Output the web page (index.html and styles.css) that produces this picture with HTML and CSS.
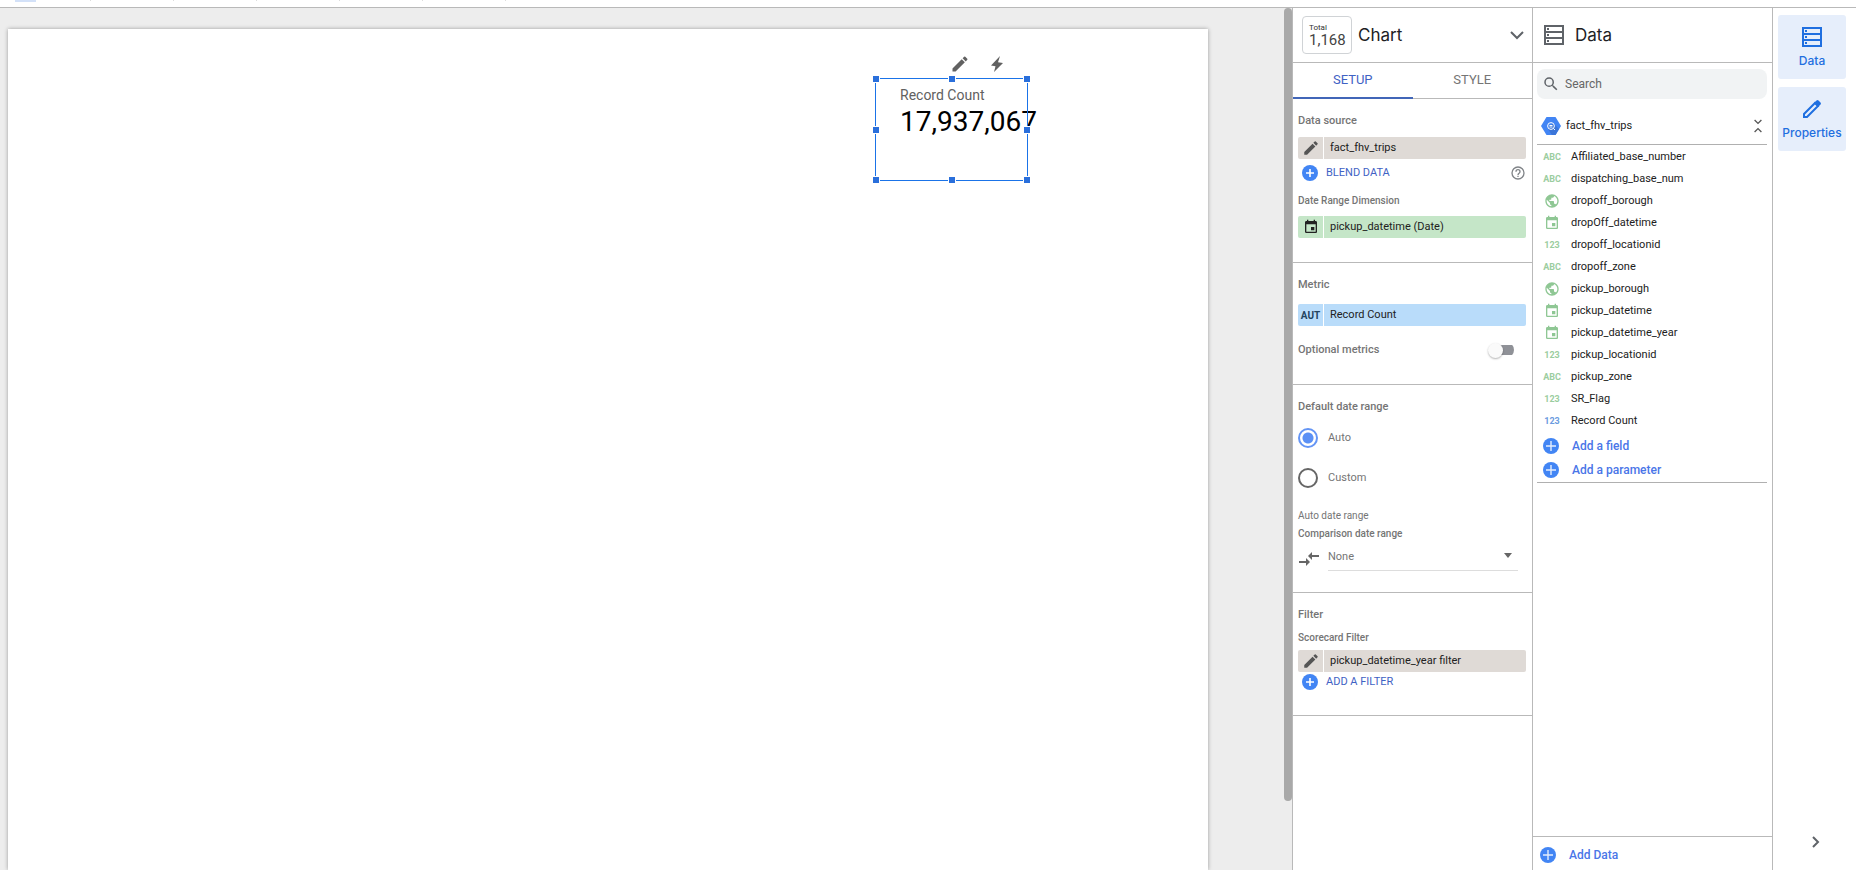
FILE: index.html
```
<!DOCTYPE html>
<html lang="en">
<head>
<meta charset="utf-8">
<title>Report editor</title>
<link rel="stylesheet" href="styles.css">
</head>
<body>
<svg class="defs" aria-hidden="true">
  <symbol id="pencil" viewBox="0 0 24 24"><path d="M3 17.250V21h3.750L17.810 9.940l-3.750-3.750L3 17.250zM20.710 7.040a1 1 0 0 0 0-1.410l-2.340-2.340a1 1 0 0 0-1.410 0l-1.830 1.830 3.750 3.750 1.830-1.830z"/></symbol>
  <symbol id="plus" viewBox="0 0 16 16"><circle cx="8" cy="8" r="8" fill="#4285f4"/><path d="M8 4v8M4 8h8" stroke="#fff" stroke-width="1.600"/></symbol>
  <symbol id="plus-large" viewBox="0 0 16 16"><circle cx="8" cy="8" r="8" fill="#4285f4"/><path d="M8 3v10M3 8h10" stroke="#e3edfd" stroke-width="1.400"/></symbol>
  <symbol id="calendar" viewBox="0 0 24 24"><path d="M17 12h-5v5h5v-5zM16 1v2H8V1H6v2H5c-1.110 0-2 .9-2 2v14a2 2 0 0 0 2 2h14c1.100 0 2-.9 2-2V5c0-1.100-.9-2-2-2h-1V1h-2zm3 18H5V8h14v11z"/></symbol>
  <symbol id="globe" viewBox="0 0 24 24"><path d="M12 2C6.480 2 2 6.480 2 12s4.480 10 10 10 10-4.480 10-10S17.520 2 12 2zm-1 17.930c-3.950-.49-7-3.850-7-7.930 0-.62.080-1.210.210-1.790L9 15v1c0 1.100.9 2 2 2v1.930zm6.900-2.540c-.26-.81-1-1.390-1.900-1.390h-1v-3c0-.55-.45-1-1-1H8v-2h2c.55 0 1-.45 1-1V7h2c1.100 0 2-.9 2-2v-.41c2.930 1.190 5 4.060 5 7.410 0 2.080-.8 3.970-2.100 5.390z"/></symbol>
  <symbol id="storage" viewBox="0 0 20 20"><path fill="none" stroke="currentColor" stroke-width="2" d="M1 1h18v18H1zM1 7h18M1 13h18"/><path fill="currentColor" d="M3 3h2v2H3zM3 9h2v2H3zM3 15h2v2H3z"/></symbol>
</svg>

<div class="toolbar"><span class="tool-active"></span><i></i><i></i><i></i><i></i><i></i><i></i></div>

<div class="editor">
  <main class="canvas">
    <div class="page">
      <div class="chart-actions">
        <button class="bare" aria-label="Edit"><svg width="20" height="20"><use href="#pencil"/></svg></button>
        <button class="bare" aria-label="Explore"><svg width="18" height="18" viewBox="0 0 18 18"><path d="M12 1 3 10.500l4.500.8L6 17l9-9-5-.8z"/></svg></button>
      </div>
      <div class="scorecard">
        <div class="score-label">Record Count</div>
        <div class="score-value">17,937,067</div>
        <div class="selection">
          <b class="h nw"></b><b class="h n"></b><b class="h ne"></b><b class="h w"></b><b class="h e"></b><b class="h sw"></b><b class="h s"></b><b class="h se"></b>
        </div>
      </div>
    </div>
    <div class="scroll"><div class="thumb"></div></div>
  </main>

  <aside class="panel">
    <header class="head">
      <div class="preview"><span>Total</span><strong>1,168</strong></div>
      <h2>Chart</h2>
      <button class="bare push" aria-label="Chart type"><svg width="14" height="9" viewBox="0 0 14 9" fill="none" stroke="#5f6368" stroke-width="2"><path d="M1 1l6 6 6-6"/></svg></button>
    </header>
    <nav class="tabs"><button class="tab on">SETUP</button><button class="tab">STYLE</button></nav>

    <section class="section">
      <h3>Data source</h3>
      <button class="chip tan"><span class="chip-icon"><svg width="18" height="18"><use href="#pencil"/></svg></span><span>fact_fhv_trips</span></button>
      <div class="link-row blend">
        <button class="link"><svg width="16" height="16"><use href="#plus"/></svg>BLEND DATA</button>
        <button class="bare push" aria-label="Help"><svg width="16" height="16" viewBox="0 0 24 24" fill="#808488"><path d="M11 18h2v-2h-2v2zm1-16a10 10 0 1 0 0 20 10 10 0 0 0 0-20zm0 18a8 8 0 1 1 0-16 8 8 0 0 1 0 16zm0-14a4 4 0 0 0-4 4h2a2 2 0 1 1 4 0c0 2-3 1.750-3 5h2c0-2.250 3-2.500 3-5a4 4 0 0 0-4-4z"/></svg></button>
      </div>
      <h4 class="dimension">Date Range Dimension</h4>
      <button class="chip green"><span class="chip-icon"><svg width="16" height="16"><use href="#calendar"/></svg></span><span>pickup_datetime (Date)</span></button>
    </section>

    <section class="section metric">
      <h3>Metric</h3>
      <button class="chip blue"><span class="chip-icon aut">AUT</span><span>Record Count</span></button>
      <label class="toggle-row">Optional metrics<input class="toggle" type="checkbox"></label>
    </section>

    <section class="section dates">
      <h3>Default date range</h3>
      <label class="radio"><input type="radio" name="range" checked>Auto</label>
      <label class="radio"><input type="radio" name="range">Custom</label>
      <p>Auto date range</p>
      <h4 id="cmp">Comparison date range</h4>
      <div class="compare">
        <svg width="20" height="14" viewBox="0 0 20 14" fill="#666"><path d="M9 4l4-4v3h7v2h-7v3zM0 9h7V6l4 4-4 4v-3H0z"/></svg>
        <div class="select-wrap"><select aria-labelledby="cmp"><option>None</option></select></div>
      </div>
    </section>

    <section class="section filter">
      <h3>Filter</h3>
      <h4>Scorecard Filter</h4>
      <button class="chip tan"><span class="chip-icon"><svg width="18" height="18"><use href="#pencil"/></svg></span><span>pickup_datetime_year filter</span></button>
      <div class="link-row"><button class="link"><svg width="16" height="16"><use href="#plus"/></svg>ADD A FILTER</button></div>
    </section>
  </aside>

  <aside class="panel data">
    <header class="head"><svg width="20" height="20"><use href="#storage"/></svg><h2>Data</h2></header>
    <div class="data-body">
      <label class="search"><svg width="18" height="18" viewBox="0 0 24 24" fill="#5f6368"><path d="M15.500 14h-.79l-.28-.27A6.470 6.470 0 0 0 16 9.500 6.500 6.500 0 1 0 9.500 16c1.610 0 3.090-.59 4.230-1.570l.27.280v.79l5 4.990L20.490 19l-4.990-5zm-6 0a4.500 4.500 0 1 1 0-9 4.500 4.500 0 0 1 0 9z"/></svg><input type="search" placeholder="Search" aria-label="Search"></label>
      <div class="source">
        <svg width="20" height="18" viewBox="0 0 20 18"><path d="M5.500 0h9L20 9l-5.500 9h-9L0 9z" fill="#4285f4"/><path d="M12 6l6 6-3.500 6H11L7 12z" fill="#3b75d8"/><circle cx="10" cy="9" r="3.400" fill="none" stroke="#fff"/><path d="M8.500 8.500h3M8.500 10h3M12.500 11.500l1.500 1.500" stroke="#fff"/></svg>
        <span>fact_fhv_trips</span>
        <button class="bare push" aria-label="Collapse"><svg width="8" height="14" viewBox="0 0 8 14" fill="none" stroke="#555" stroke-width="1.300"><path d="M.6 1 4 4.400 7.400 1M.6 13 4 9.600 7.400 13"/></svg></button>
      </div>
      <ul class="fields">
        <li><span class="type">ABC</span>Affiliated_base_number</li>
        <li><span class="type">ABC</span>dispatching_base_num</li>
        <li><span class="type"><svg width="16" height="16"><use href="#globe"/></svg></span>dropoff_borough</li>
        <li><span class="type"><svg width="16" height="16"><use href="#calendar"/></svg></span>dropOff_datetime</li>
        <li><span class="type">123</span>dropoff_locationid</li>
        <li><span class="type">ABC</span>dropoff_zone</li>
        <li><span class="type"><svg width="16" height="16"><use href="#globe"/></svg></span>pickup_borough</li>
        <li><span class="type"><svg width="16" height="16"><use href="#calendar"/></svg></span>pickup_datetime</li>
        <li><span class="type"><svg width="16" height="16"><use href="#calendar"/></svg></span>pickup_datetime_year</li>
        <li><span class="type">123</span>pickup_locationid</li>
        <li><span class="type">ABC</span>pickup_zone</li>
        <li><span class="type">123</span>SR_Flag</li>
        <li><span class="type num">123</span>Record Count</li>
      </ul>
      <div class="adds">
        <button class="add"><svg width="16" height="16"><use href="#plus-large"/></svg>Add a field</button>
        <button class="add"><svg width="16" height="16"><use href="#plus-large"/></svg>Add a parameter</button>
      </div>
    </div>
    <footer class="foot"><button class="add"><svg width="16" height="16"><use href="#plus-large"/></svg>Add Data</button></footer>
  </aside>

  <nav class="rail">
    <button class="rail-btn"><svg width="20" height="20"><use href="#storage"/></svg>Data</button>
    <button class="rail-btn"><svg width="20" height="20" viewBox="0 0 20 20"><path d="M2 18v-3L13 4l3 3L5 18z" fill="none" stroke="currentColor" stroke-width="2"/><path d="M12 4l2.500-2.500q1-1 2 0l2 2q1 1 0 2L16 8z" fill="currentColor"/></svg>Properties</button>
    <button class="bare expand" aria-label="Expand"><svg width="8" height="12" viewBox="0 0 8 12" fill="none" stroke="#5f6368" stroke-width="2"><path d="M1 1l5 5-5 5"/></svg></button>
  </nav>
</div>
</body>
</html>
```
FILE: styles.css
```
* { box-sizing: border-box; }
body {
  margin: 0;
  height: 100vh;
  display: flex;
  flex-direction: column;
  overflow: hidden;
  background: #fff;
  color: #212121;
  font: 11px/16px Roboto, sans-serif;
}
h2, h3, h4, p, ul { margin: 0; padding: 0; }
button { font: inherit; color: inherit; border: 0; background: none; padding: 0; text-align: left; }
svg { display: block; flex: none; }
.defs { position: absolute; width: 0; height: 0; }
.bare { display: block; }
.push { margin-left: auto; }

.toolbar {
  flex: none;
  height: 8px;
  padding-left: 15px;
  border-bottom: 1px solid #b9b9b9;
  display: flex;
  gap: 82px;
}
.tool-active { width: 21px; height: 2px; background: #d3e1f8; margin-right: -28px; }
.toolbar i { width: 1px; height: 1px; background: #ddd; }

.editor { flex: 1; min-height: 0; display: flex; }

.canvas { flex: 1; min-width: 0; display: flex; background: #ededed; }
.page {
  position: relative;
  flex: 1;
  margin: 21px 76px 0 8px;
  background: #fff;
  box-shadow: 0 0 4px rgba(0, 0, 0, .35);
}
.scroll { width: 8px; }
.thumb { height: 92%; border-radius: 4px; background: #a9a9a9; }

.chart-actions { position: absolute; left: 942px; top: 25px; display: flex; align-items: center; gap: 18px; fill: #616161; }
.scorecard { position: absolute; left: 867px; top: 49px; width: 153px; height: 103px; padding: 8px 0 0 25px; }
.score-label { font-size: 14px; line-height: 18px; color: #616161; }
.score-value { font-size: 28px; line-height: 36px; color: #000; white-space: nowrap; }
.selection { position: absolute; inset: 0; border: 1px solid #1a73e8; }
.h { position: absolute; width: 8px; height: 8px; background: #2a6fdb; border: 1px solid #fff; }

.panel { flex: none; width: 240px; border-left: 1px solid #b9b9b9; display: flex; flex-direction: column; }
.head { flex: none; height: 55px; border-bottom: 1px solid #b9b9b9; display: flex; align-items: center; padding: 0 8px 0 9px; }
h2 { font: 400 17px/24px Inter, Roboto, sans-serif; color: #202124; }
.preview {
  width: 50px; height: 38px; margin-right: 6px; padding: 6px 0 0 6px;
  border: 1px solid #d0d3d6; border-radius: 4px;
  display: flex; flex-direction: column; color: #333;
}
.preview span { font-size: 8px; line-height: 9px; }
.preview strong { font-weight: 400; font-size: 15px; line-height: 17px; color: #444; }

.tabs { flex: none; height: 36px; display: flex; border-bottom: 1px solid #b9b9b9; }
.tab { flex: 1; height: 36px; text-align: center; font-size: 13px; color: #757575; border-bottom: 2px solid transparent; }
.tab.on { color: #3f62c4; border-bottom-color: #4166b8; }

.section { padding: 12px 6px 24px 5px; border-bottom: 1px solid #b9b9b9; display: flex; flex-direction: column; }
h3 { font-size: 11px; line-height: 20px; font-weight: 500; color: #757575; margin-bottom: 6px; }
h4 { font-size: 10px; line-height: 16px; font-weight: 500; color: #757575; margin-bottom: 4px; }
.dimension { margin: 6px 0 7px; }
.chip { height: 22px; border-radius: 2px; display: flex; align-items: center; gap: 6px; color: #212121; }
.chip-icon { width: 26px; height: 22px; border-right: 1px solid #fff; display: flex; align-items: center; justify-content: center; }
.tan { background: #dfdad6; fill: #555; }
.green { background: #c5e6c8; fill: #222; }
.blue { background: #b9dcfa; }
.aut { font: 700 10px "Liberation Sans Narrow", Roboto, sans-serif; color: #24445e; }
.link-row { height: 20px; display: flex; align-items: center; padding: 0 0 0 4px; }
.blend { height: 28px; }
.link { display: flex; align-items: center; gap: 8px; color: #3f62c4; }

.metric h3 { margin-bottom: 9px; }
.toggle-row { margin-top: 14px; height: 20px; display: flex; align-items: center; justify-content: space-between; padding-right: 12px; font-weight: 500; color: #757575; }
.toggle { appearance: none; margin: 0; width: 26px; height: 16px; display: flex; align-items: center; background: linear-gradient(#8f9197, #8f9197) right center / 20px 10px no-repeat; border-radius: 8px; }
.toggle::before { content: ""; width: 15px; height: 15px; border-radius: 50%; background: #fafafa; box-shadow: 0 1px 2px rgba(0, 0, 0, .3); }

.radio { height: 20px; margin-top: 20px; display: flex; align-items: center; gap: 10px; color: #757575; }
h3 + .radio { margin-top: 5px; }
.radio input { appearance: none; margin: 0; width: 20px; height: 20px; border: 2px solid #666; border-radius: 50%; }
.radio input:checked { border-color: #6495f5; background: radial-gradient(circle, #5b90f5 5px, #fff 6px); }
.dates { padding-bottom: 21px; }
.dates p { font-size: 10px; color: #757575; margin: 20px 0 2px; }
.compare { height: 25px; display: flex; align-items: center; gap: 9px; padding: 0 8px 0 1px; }
.select-wrap { position: relative; flex: 1; height: 25px; border-bottom: 1px solid #ddd; }
.select-wrap::after { content: ""; position: absolute; right: 6px; top: 7px; border: 4px solid transparent; border-top: 5px solid #666; border-bottom: 0; }
select { appearance: none; width: 100%; height: 22px; border: 0; padding: 0; background: none; font: inherit; color: #757575; }
.filter { padding-bottom: 23px; }
.filter h3 { margin-bottom: 5px; }

.data .head { padding-left: 11px; gap: 11px; color: #5f6368; }
.data-body { flex: 1; padding: 6px 5px 0 4px; }
.search { height: 30px; border-radius: 8px; background: #f1f3f4; display: flex; align-items: center; gap: 5px; padding-left: 5px; }
.search input { flex: 1; min-width: 0; border: 0; padding: 0; background: none; font: 12px Roboto, sans-serif; }
.search input::placeholder { color: #666; }
.source { margin-top: 9px; height: 37px; display: flex; align-items: center; gap: 5px; padding: 0 5px 0 4px; border-bottom: 1px solid #b0b0b0; }
.fields { list-style: none; padding-top: 1px; }
.fields li { height: 22px; display: flex; align-items: center; gap: 11px; padding-left: 7px; color: #212121; }
.type { width: 16px; display: flex; justify-content: center; font: 700 9px "Liberation Sans Narrow", Roboto, sans-serif; color: #9bcd9f; fill: #8fc794; }
.num { color: #6b9be0; }
.adds { padding: 1px 0 0 6px; border-bottom: 1px solid #b0b0b0; }
.add { height: 25px; display: flex; align-items: center; gap: 13px; font: 500 12px/16px Roboto, sans-serif; color: #4a76e8; }
.adds .add + .add { height: 24px; }
.foot { flex: none; height: 34px; border-top: 1px solid #b9b9b9; padding: 5px 0 0 7px; }

.rail { flex: none; width: 84px; border-left: 1px solid #b9b9b9; padding: 7px 10px 22px 5px; display: flex; flex-direction: column; gap: 8px; }
.rail-btn { height: 64px; border-radius: 3px; background: #e6eefb; color: #1f6fe0; display: flex; flex-direction: column; align-items: center; justify-content: center; gap: 6px; padding-top: 2px; font: 500 12px/16px Inter, Roboto, sans-serif; }
.expand { margin: auto 26px 0 auto; }
.nw, .n, .ne { top: -4px; }
.w, .e { top: 47px; }
.sw, .s, .se { bottom: -4px; }
.nw, .w, .sw { left: -4px; }
.n, .s { left: 72px; }
.ne, .e, .se { right: -4px; }
```
